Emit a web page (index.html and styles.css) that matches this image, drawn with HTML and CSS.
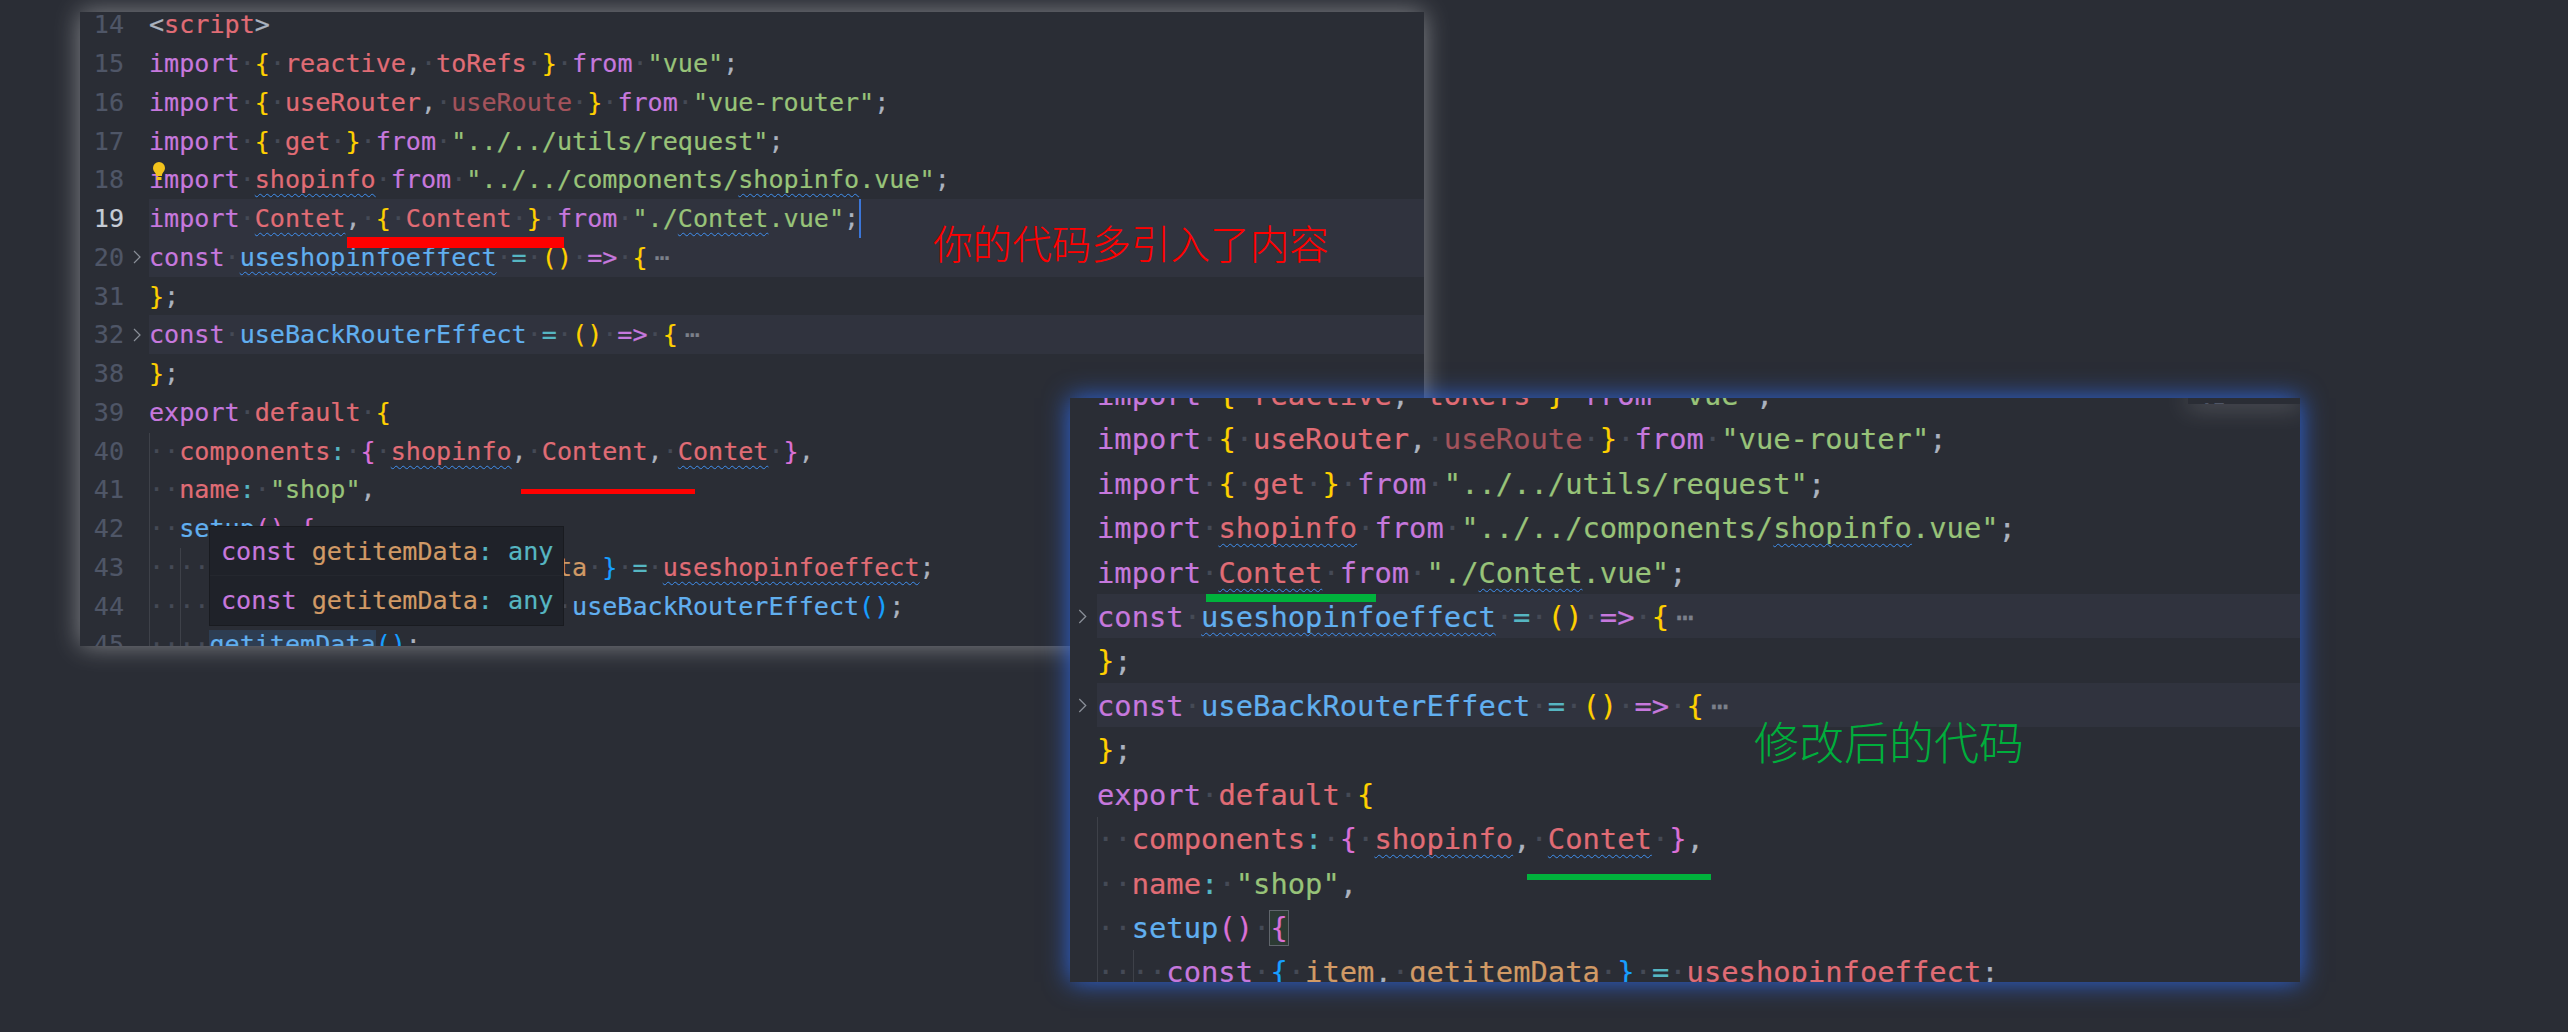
FILE: index.html
```html
<!DOCTYPE html>
<html lang="zh">
<head>
<meta charset="utf-8">
<title>代码对比</title>
<link rel="stylesheet" href="styles.css">
</head>
<body>
<main class="canvas">

<section class="win win-a">
  <div class="code code-a">
    <div class="row"><span class="num">14</span><span class="chev"></span><span class="txt"><span class="p">&lt;</span><span class="r">script</span><span class="p">&gt;</span></span></div>
    <div class="row"><span class="num">15</span><span class="chev"></span><span class="txt"><span class="k">import</span>·<span class="y">{</span>·<span class="r">reactive</span><span class="p">,</span>·<span class="r">toRefs</span>·<span class="y">}</span>·<span class="k">from</span>·<span class="g">"vue"</span><span class="p">;</span></span></div>
    <div class="row"><span class="num">16</span><span class="chev"></span><span class="txt"><span class="k">import</span>·<span class="y">{</span>·<span class="r">useRouter</span><span class="p">,</span>·<span class="dim">useRoute</span>·<span class="y">}</span>·<span class="k">from</span>·<span class="g">"vue-router"</span><span class="p">;</span></span></div>
    <div class="row"><span class="num">17</span><span class="chev"></span><span class="txt"><span class="k">import</span>·<span class="y">{</span>·<span class="r">get</span>·<span class="y">}</span>·<span class="k">from</span>·<span class="g">"../../utils/request"</span><span class="p">;</span></span></div>
    <div class="row"><span class="num">18</span><span class="chev"></span><span class="txt"><span class="k">import</span>·<span class="r w">shopinfo</span>·<span class="k">from</span>·<span class="g">"../../components/<span class="w">shopinfo</span>.vue"</span><span class="p">;</span></span></div>
    <div class="row row-on"><span class="num num-on">19</span><span class="chev"></span><span class="txt"><span class="k">import</span>·<span class="r w">Contet</span><span class="p">,</span>·<span class="y">{</span>·<span class="r">Content</span>·<span class="y">}</span>·<span class="k">from</span>·<span class="g">"./<span class="w">Contet</span>.vue"</span><span class="p">;</span><span class="caret"></span></span></div>
    <div class="row row-on"><span class="num">20</span><span class="chev"><svg class="fold" viewBox="0 0 8 14" aria-hidden="true"><path d="M1 1l6 6-6 6" /></svg></span><span class="txt"><span class="k">const</span>·<span class="b w">useshopinfoeffect</span>·<span class="t">=</span>·<span class="y">()</span>·<span class="k">=&gt;</span>·<span class="y">{</span><span class="more">⋯</span></span></div>
    <div class="row"><span class="num">31</span><span class="chev"></span><span class="txt"><span class="y">}</span><span class="p">;</span></span></div>
    <div class="row row-on"><span class="num">32</span><span class="chev"><svg class="fold" viewBox="0 0 8 14" aria-hidden="true"><path d="M1 1l6 6-6 6" /></svg></span><span class="txt"><span class="k">const</span>·<span class="b">useBackRouterEffect</span>·<span class="t">=</span>·<span class="y">()</span>·<span class="k">=&gt;</span>·<span class="y">{</span><span class="more">⋯</span></span></div>
    <div class="row"><span class="num">38</span><span class="chev"></span><span class="txt"><span class="y">}</span><span class="p">;</span></span></div>
    <div class="row"><span class="num">39</span><span class="chev"></span><span class="txt"><span class="k">export</span>·<span class="r">default</span>·<span class="y">{</span></span></div>
    <div class="row"><span class="num">40</span><span class="chev"></span><span class="txt">··<span class="r">components</span><span class="t">:</span>·<span class="pk">{</span>·<span class="r w">shopinfo</span><span class="p">,</span>·<span class="r">Content</span><span class="p">,</span>·<span class="r w">Contet</span>·<span class="pk">}</span><span class="p">,</span></span></div>
    <div class="row"><span class="num">41</span><span class="chev"></span><span class="txt">··<span class="r">name</span><span class="t">:</span>·<span class="g">"shop"</span><span class="p">,</span></span></div>
    <div class="row"><span class="num">42</span><span class="chev"></span><span class="txt">··<span class="b">setup</span><span class="pk">()</span>·<span class="pk">{</span></span></div>
    <div class="row"><span class="num">43</span><span class="chev"></span><span class="txt">····<span class="k">const</span>·<span class="bb">{</span>·<span class="o">item</span><span class="p">,</span>·<span class="o">getitemData</span>·<span class="bb">}</span>·<span class="t">=</span>·<span class="r w">useshopinfoeffect</span><span class="p">;</span></span></div>
    <div class="row"><span class="num">44</span><span class="chev"></span><span class="txt">····<span class="k">const</span>·<span class="o">handleBackClick</span>·<span class="t">=</span>·<span class="b">useBackRouterEffect</span><span class="bb">()</span><span class="p">;</span></span></div>
    <div class="row"><span class="num">45</span><span class="chev"></span><span class="txt">····<span class="b sel">getitemData</span><span class="bb">()</span><span class="p">;</span></span></div>
  </div>
  <span class="guide guide-a1"></span>
  <span class="guide guide-a2"></span>
  <svg class="bulb" viewBox="0 0 14 20" aria-hidden="true"><path d="M7 1a6 6 0 0 0-6 6c0 2.400 1.400 3.600 2.400 5.200.6 1 .6 1.800.6 2.800h6c0-1 0-1.800.6-2.800C11.600 10.600 13 9.400 13 7a6 6 0 0 0-6-6z" fill="#f2c31c"/><rect x="4.500" y="16" width="5" height="3" fill="#f2c31c"/></svg>
  <div class="tip">
    <div class="tip-row"><span class="k">const</span> <span class="o">getitemData</span><span class="t">:</span> <span class="t">any</span></div>
    <div class="tip-row"><span class="k">const</span> <span class="o">getitemData</span><span class="t">:</span> <span class="t">any</span></div>
  </div>
</section>

<section class="win win-b">
  <div class="code code-b">
    <div class="row"><span class="chev"></span><span class="txt"><span class="k">import</span>·<span class="y">{</span>·<span class="r">reactive</span><span class="p">,</span>·<span class="r">toRefs</span>·<span class="y">}</span>·<span class="k">from</span>·<span class="g">"vue"</span><span class="p">;</span></span></div>
    <div class="row"><span class="chev"></span><span class="txt"><span class="k">import</span>·<span class="y">{</span>·<span class="r">useRouter</span><span class="p">,</span>·<span class="dim">useRoute</span>·<span class="y">}</span>·<span class="k">from</span>·<span class="g">"vue-router"</span><span class="p">;</span></span></div>
    <div class="row"><span class="chev"></span><span class="txt"><span class="k">import</span>·<span class="y">{</span>·<span class="r">get</span>·<span class="y">}</span>·<span class="k">from</span>·<span class="g">"../../utils/request"</span><span class="p">;</span></span></div>
    <div class="row"><span class="chev"></span><span class="txt"><span class="k">import</span>·<span class="r w">shopinfo</span>·<span class="k">from</span>·<span class="g">"../../components/<span class="w">shopinfo</span>.vue"</span><span class="p">;</span></span></div>
    <div class="row"><span class="chev"></span><span class="txt"><span class="k">import</span>·<span class="r w">Contet</span>·<span class="k">from</span>·<span class="g">"./<span class="w">Contet</span>.vue"</span><span class="p">;</span></span></div>
    <div class="row row-on"><span class="chev"><svg class="fold" viewBox="0 0 8 14" aria-hidden="true"><path d="M1 1l6 6-6 6" /></svg></span><span class="txt"><span class="k">const</span>·<span class="b w">useshopinfoeffect</span>·<span class="t">=</span>·<span class="y">()</span>·<span class="k">=&gt;</span>·<span class="y">{</span><span class="more">⋯</span></span></div>
    <div class="row"><span class="chev"></span><span class="txt"><span class="y">}</span><span class="p">;</span></span></div>
    <div class="row row-on"><span class="chev"><svg class="fold" viewBox="0 0 8 14" aria-hidden="true"><path d="M1 1l6 6-6 6" /></svg></span><span class="txt"><span class="k">const</span>·<span class="b">useBackRouterEffect</span>·<span class="t">=</span>·<span class="y">()</span>·<span class="k">=&gt;</span>·<span class="y">{</span><span class="more">⋯</span></span></div>
    <div class="row"><span class="chev"></span><span class="txt"><span class="y">}</span><span class="p">;</span></span></div>
    <div class="row"><span class="chev"></span><span class="txt"><span class="k">export</span>·<span class="r">default</span>·<span class="y">{</span></span></div>
    <div class="row"><span class="chev"></span><span class="txt">··<span class="r">components</span><span class="t">:</span>·<span class="pk">{</span>·<span class="r w">shopinfo</span><span class="p">,</span>·<span class="r w">Contet</span>·<span class="pk">}</span><span class="p">,</span></span></div>
    <div class="row"><span class="chev"></span><span class="txt">··<span class="r">name</span><span class="t">:</span>·<span class="g">"shop"</span><span class="p">,</span></span></div>
    <div class="row"><span class="chev"></span><span class="txt">··<span class="b">setup</span><span class="pk">()</span>·<span class="pk match">{</span></span></div>
    <div class="row"><span class="chev"></span><span class="txt">····<span class="k">const</span>·<span class="bb">{</span>·<span class="o">item</span><span class="p">,</span>·<span class="o">getitemData</span>·<span class="bb">}</span>·<span class="t">=</span>·<span class="r w">useshopinfoeffect</span><span class="p">;</span></span></div>
  </div>
  <span class="guide guide-b1"></span>
  <span class="guide guide-b2"></span>
  <div class="scrap"><span class="scrap-num">45</span><span class="scrap-dots">··</span></div>
</section>

<span class="bar bar-r1"></span>
<span class="bar bar-r2"></span>
<span class="bar bar-g1"></span>
<span class="bar bar-g2"></span>
<p class="note note-red">你的代码多引入了内容</p>
<p class="note note-green">修改后的代码</p>

</main>
</body>
</html>
```

FILE: styles.css
```css
* { box-sizing: border-box; }
html, body { margin: 0; height: 100%; background: #2a2d35; overflow: hidden; }

.canvas { position: relative; width: 2568px; height: 1032px; background: #2a2d35; }

.win { position: absolute; background: #2a2d35; }
.win-a { left: 80px; top: 12px; width: 1344px; height: 634px; box-shadow: 0 0 24px rgba(255,255,255,.42); }
.win-b { left: 1070px; top: 398px; width: 1230px; height: 584px; box-shadow: 0 0 24px #2e66e0; }

.code { position: absolute; left: 0; right: 0; top: 0; bottom: 0; overflow: hidden; font-family: "DejaVu Sans Mono", monospace; color: #454a56; -webkit-text-stroke: .2px; }
.code-a { font-size: 25.1px; --row: 38.75px; --nudge: 1px; }
.code-b { font-size: 28.8px; --row: 44.45px; --nudge: 3px; }
.code-a .row:first-child { margin-top: -6.75px; }
.code-b .row:first-child { margin-top: -26.25px; }

.row { display: flex; height: var(--row); line-height: calc(var(--row) + var(--nudge)); white-space: pre; }
.txt { flex: 1; position: relative; }
.row-on .txt { background: #30333e; }
.num { width: 37px; margin-left: 7px; text-align: right; color: #4f5667; }
.num-on { color: #c6ccd6; }
.chev { width: 25px; display: flex; align-items: center; justify-content: center; }
.code-b .chev { width: 27px; justify-content: flex-start; padding-left: 8px; }
.fold { width: 8px; height: 14px; fill: none; stroke: #8a8f98; stroke-width: 1.2; }
.code-b .fold { width: 9px; height: 15px; }

.k { color: #c678dd; }
.r { color: #e06c75; }
.dim { color: #a3535c; }
.g { color: #98c379; }
.y { color: #ffd000; }
.b { color: #61afef; }
.t { color: #56b6c2; }
.o { color: #d19a66; }
.p { color: #abb2bf; }
.pk { color: #da70d6; }
.bb { color: #179fff; }
.w { text-decoration: underline wavy #4090f0 1.2px; text-underline-offset: 5px; text-decoration-skip-ink: none; }
.more { color: #7b808a; margin-left: 7px; }
.sel { background: #2d3d52; }
.match { outline: 1px solid #60656c; background: #2c3a33; }
.caret { display: inline-block; width: 2px; height: var(--row); background: #3b76d8; vertical-align: top; }

.guide { position: absolute; width: 1px; background: #3e4149; }
.guide-a1 { left: 69px; top: 421px; bottom: 0; }
.guide-a2 { left: 100px; top: 536px; bottom: 0; }
.guide-b1 { left: 27px; top: 419px; bottom: 0; }
.guide-b2 { left: 63px; top: 552px; bottom: 0; }

.bulb { position: absolute; left: 72px; top: 149px; width: 14px; height: 20px; }

.tip { position: absolute; left: 129px; top: 514px; width: 355px; height: 100px; background: #1f2229; border: 1px solid #191b20; font-family: "DejaVu Sans Mono", monospace; font-size: 25.1px; -webkit-text-stroke: .2px; }
.tip-row { height: 49px; line-height: 49px; padding-left: 11px; white-space: pre; }
.tip-row:first-child { border-bottom: 1px solid #24272e; }

.scrap { position: absolute; right: 0; top: 0; width: 112px; height: 6px; background: #2a2d35; box-shadow: 0 0 24px rgba(255,255,255,.5); clip-path: inset(0 0 -40px -40px); font-family: "DejaVu Sans Mono", monospace; font-size: 25px; line-height: 18px; white-space: pre; color: #4f5667; overflow: hidden; }
.scrap-num { margin-left: 9px; }
.scrap-dots { margin-left: 32px; color: #454a56; vertical-align: 6px; }

.bar { position: absolute; display: block; }
.bar-r1 { left: 347px; top: 237px; width: 217px; height: 11px; background: #ff0000; }
.bar-r2 { left: 521px; top: 489px; width: 174px; height: 5px; background: #ff0000; }
.bar-g1 { left: 1206px; top: 594px; width: 170px; height: 8px; background: #00b23c; }
.bar-g2 { left: 1527px; top: 874px; width: 184px; height: 6px; background: #00b23c; }

.note { position: absolute; margin: 0; font-family: "Noto Sans CJK SC", sans-serif; font-weight: 300; white-space: nowrap; line-height: 1; }
.note-red { left: 933px; top: 222px; font-size: 39.6px; color: #ff0000; }
.note-green { left: 1754px; top: 718px; font-size: 45px; color: #00ae3c; }
```
